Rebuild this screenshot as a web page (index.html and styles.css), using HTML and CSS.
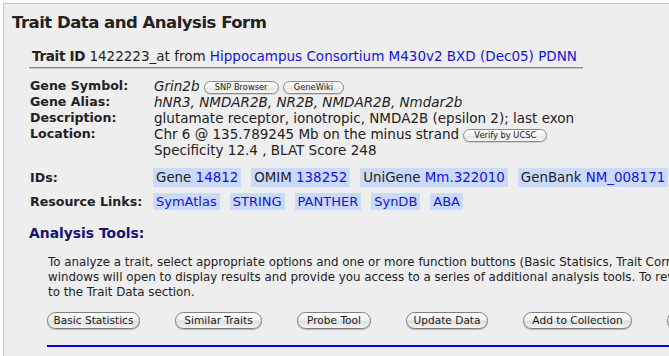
FILE: index.html
```html
<!DOCTYPE html>
<html>
<head>
<meta charset="utf-8">
<link rel="stylesheet" href="styles.css">
</head>
<body>
<div class="page">
  <h1 class="title">Trait Data and Analysis Form</h1>
  <div class="trait-id"><b>Trait ID</b> 1422223_at from <a href="#">Hippocampus Consortium M430v2 BXD (Dec05) PDNN</a></div>

  <div class="info">
    <div class="lbl">Gene Symbol:</div>
    <div class="val"><i>Grin2b</i> <button class="mini">SNP Browser</button> <button class="mini">GeneWiki</button></div>
    <div class="lbl">Gene Alias:</div>
    <div class="val"><i>hNR3, NMDAR2B, NR2B, NMDAR2B, Nmdar2b</i></div>
    <div class="lbl">Description:</div>
    <div class="val">glutamate receptor, ionotropic, NMDA2B (epsilon 2); last exon</div>
    <div class="lbl">Location:</div>
    <div class="val">Chr 6 @ 135.789245 Mb on the minus strand <button class="mini">Verify by UCSC</button><br>Specificity 12.4 , BLAT Score 248</div>
  </div>

  <div class="row ids">
    <div class="lbl">IDs:</div>
    <div class="chips">
      <span class="chip">Gene <a href="#">14812</a></span>
      <span class="chip">OMIM <a href="#">138252</a></span>
      <span class="chip">UniGene <a href="#">Mm.322010</a></span>
      <span class="chip">GenBank <a href="#">NM_008171</a></span>
    </div>
  </div>

  <div class="row res">
    <div class="lbl">Resource Links:</div>
    <div class="chips">
      <span class="chip"><a href="#">SymAtlas</a></span>
      <span class="chip"><a href="#">STRING</a></span>
      <span class="chip"><a href="#">PANTHER</a></span>
      <span class="chip"><a href="#">SynDB</a></span>
      <span class="chip"><a href="#">ABA</a></span>
    </div>
  </div>

  <h2 class="tools-title">Analysis Tools:</h2>
  <div class="tools">
    <p class="intro">To analyze a trait, select appropriate options and one or more function buttons (Basic Statisics, Trait Correlations, Interval Mapping, Marker Regression). Separate<br>windows will open to display results and provide you access to a series of additional analysis tools. To review the data values, scroll down<br>to the Trait Data section.</p>
    <div class="btns">
      <button class="btn btn-stats">Basic Statistics</button>
      <button class="btn btn-similar">Similar Traits</button>
      <button class="btn btn-probe">Probe Tool</button>
      <button class="btn btn-update">Update Data</button>
      <button class="btn btn-collect">Add to Collection</button>
      <button class="btn btn-export">Export Data</button>
    </div>
    <div class="rule"></div>
  </div>
</div>
</body>
</html>
```
FILE: styles.css
```css
html, body {
  margin: 0;
  padding: 0;
  overflow: hidden;
  background: #ffffff;
}
body {
  font-family: "DejaVu Sans", Verdana, sans-serif;
  color: #222222;
  width: 1100px;
}
.page {
  margin: 3px 0 0 3px;
  border-top: 1px solid #c9c9c9;
  border-left: 1px solid #c9c9c9;
  background: #eeeeee;
  height: 400px;
  padding-top: 9px;
}
.title {
  margin: 0 0 0 8px;
  font-size: 16.5px;
  letter-spacing: -0.5px;
  line-height: 20px;
  font-weight: bold;
  color: #222222;
}
.trait-id {
  margin: 14px 0 0 25px;
  padding: 0 0 2px 3px;
  width: 551px;
  font-size: 13.5px;
  line-height: 18px;
  white-space: nowrap;
  border-bottom: 1px solid #8c8c8c;
  box-shadow: 0 1px 0 #c6c6c6;
}
.trait-id b { letter-spacing: -0.3px; }
a {
  color: #1414dc;
  text-decoration: none;
}
.info {
  margin: 10px 0 0 26px;
  display: grid;
  grid-template-columns: 124px auto;
  line-height: 16px;
}
.lbl {
  font-weight: bold;
  font-size: 12.6px;
  white-space: nowrap;
}
.val {
  font-size: 13.5px;
  white-space: nowrap;
}
.mini {
  display: inline-block;
  vertical-align: 1px;
  height: 13px;
  padding: 0 10px;
  margin: 0;
  font-family: "DejaVu Sans", Verdana, sans-serif;
  font-size: 8.3px;
  line-height: 11px;
  color: #222222;
  border: 1px solid #8a8a8a;
  border-radius: 7px;
  background: linear-gradient(#ffffff, #f0f0f0 50%, #e2e2e2 51%, #f6f6f6);
  box-shadow: 0 1px 0 rgba(0,0,0,0.12);
}
.row {
  margin-left: 26px;
  display: flex;
  align-items: baseline;
}
.row .lbl { width: 123px; flex: none; }
.ids { margin-top: 10px; }
.res { margin-top: 6px; }
.chips {
  display: flex;
  gap: 10px;
  white-space: nowrap;
}
.chip {
  background: #cbd9fb;
  padding: 0 3px;
  font-size: 13.4px;
  line-height: 19px;
}
.res .chip { font-size: 13px; line-height: 17px; padding: 0 3px; }
.tools-title {
  margin: 14px 0 0 25px;
  font-size: 13.9px;
  line-height: 18px;
  font-weight: bold;
  color: #141478;
}
.tools {
  margin-left: 43px;
}
.intro {
  margin: 13px 0 0 1px;
  font-size: 11.85px;
  line-height: 15px;
  white-space: nowrap;
}
.btns {
  margin-top: 12px;
  display: flex;
  gap: 35px;
  white-space: nowrap;
}
.btn {
  flex: none;
  height: 17px;
  padding: 0;
  margin: 0;
  text-align: center;
  font-family: "DejaVu Sans", Verdana, sans-serif;
  font-size: 10.6px;
  line-height: 15px;
  color: #1a1a1a;
  border: 1px solid #7e7e7e;
  border-radius: 9px;
  background: linear-gradient(#ffffff, #f2f2f2 45%, #dedede 55%, #f4f4f4);
  box-shadow: 0 1px 1px rgba(0,0,0,0.25);
}
.btn-stats { width: 93px; }
.btn-similar { width: 87px; }
.btn-probe { width: 74px; }
.btn-update { width: 82px; }
.btn-collect { width: 109px; }
.btn-export { width: 82px; }
.rule {
  margin-top: 16px;
  height: 2px;
  background: #0000ee;
}
```
